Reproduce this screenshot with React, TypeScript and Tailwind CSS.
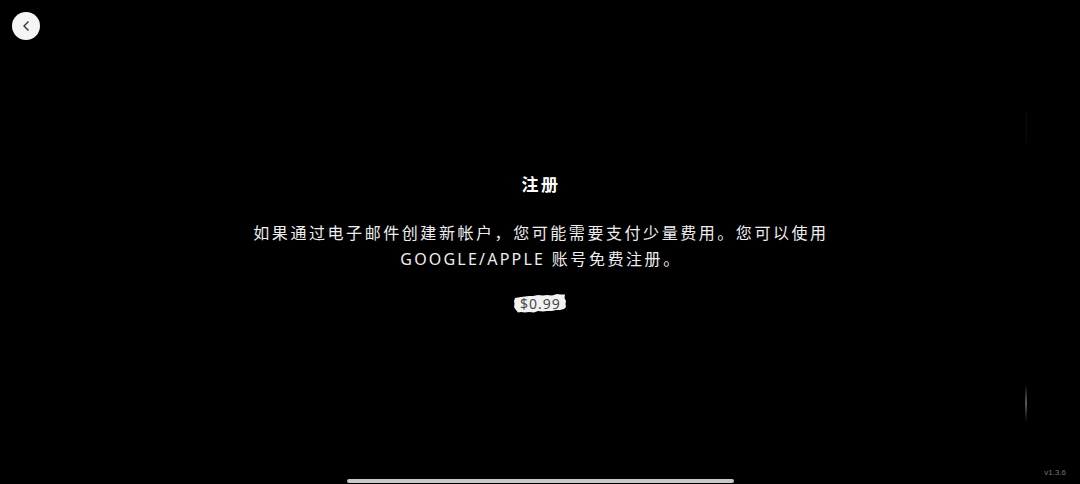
import React from 'react';

const FONT = "font-['Noto_Sans','Noto_Sans_CJK_SC',sans-serif]";

// torn-paper patch behind the price
const TornPatch: React.FC = () => (
    <svg className="absolute inset-0" width="54" height="22" viewBox="0 0 54 22">
        <path
            d="M2 5 L8 4 L12 3.5 L16 3 L20 3 L25 2 L30 2.5 L34 2 L39 2.5 L44 1 L48 1.5 L52 1.5 L51.5 5 L53 8 L52.5 11 L53 14 L51 16 L47 17 L43 17 L39 18 L34 18 L30 18.5 L25 18 L21 19.5 L16 19 L12 19.5 L8 19 L5 19.5 L3 17 L1 14 L1.5 11 L1 8 Z"
            fill="#f2f2f2"
        />
    </svg>
);

const App: React.FC = () => {
    return (
        <div className={`relative flex flex-col w-[1080px] h-[484px] overflow-hidden bg-black antialiased ${FONT}`}>
            <header className="pl-3 pt-3">
                <button className="w-7 h-7 rounded-full bg-[#f5f5f5] flex items-center justify-center">
                    <svg width="12" height="14" viewBox="0 0 12 14" fill="none">
                        <path d="M8.5 2.5 L4 7 L8.5 11.5" stroke="#333" strokeWidth="1.4" />
                    </svg>
                </button>
            </header>

            {/* Message */}
            <main className="flex-1 flex flex-col items-center pt-[134px]">
                <h1 className="ml-[2px] text-white text-[17px] leading-[22px] font-bold tracking-[2.5px]">注册</h1>
                <p className="ml-[2px] mt-[24px] w-[600px] text-center text-[#eeeeee] text-base leading-[26px] tracking-[2.56px]">
                    如果通过电子邮件创建新帐户，您可能需要支付少量费用。您可以使用
                    <br />
                    <span className="tracking-[2.2px]">GOOGLE/APPLE</span> 账号免费注册。
                </p>
                <div className="relative mt-[21px] w-[54px] h-[22px] flex items-center justify-center">
                    <TornPatch />
                    <span className="relative ml-[1px] text-[#484848] text-sm leading-[22px] tracking-[1px]">$0.99</span>
                </div>
            </main>

            {/* Faint streaks at the right edge */}
            <div className="absolute left-[1025px] top-[384px] w-[2px] h-[38px] bg-gradient-to-b from-transparent via-[#5a5a5a] to-transparent" />
            <div className="absolute left-[1026px] top-[112px] w-[1px] h-[30px] bg-[#0c0c0c]" />

            <footer className="flex flex-col">
                <span className="self-end pr-[14px] text-[8px] leading-3 text-[#777] font-['Liberation_Sans',sans-serif]">v1.3.6</span>
                <div className="self-center mb-px w-[387px] h-[4px] rounded-sm bg-[#c8c8c8]" />
            </footer>
        </div>
    );
};

export default App;
